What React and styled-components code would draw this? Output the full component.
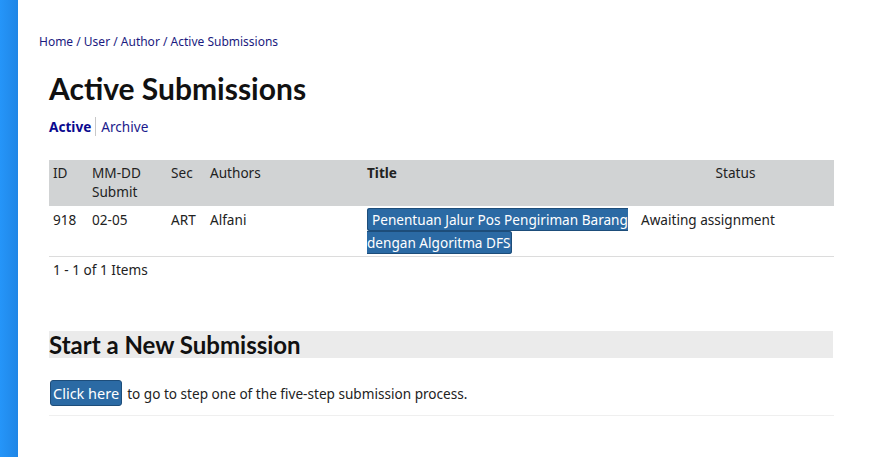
import React from "react";
import styled, { createGlobalStyle } from "styled-components";

const GlobalStyle = createGlobalStyle`
  html, body {
    margin: 0;
    padding: 0;
    background: #fff;
  }
  body {
    font-family: "Noto Sans", "DejaVu Sans", sans-serif;
    color: #222;
  }
`;

const Page = styled.div`
  display: flex;
  min-height: 100vh;
`;

const SideBar = styled.div`
  width: 18px;
  flex-shrink: 0;
  background: linear-gradient(to right, #2595f9, #1f86e6);
`;

const Main = styled.div`
  flex: 1;
  padding: 33px 0 0 21px;
`;

const Breadcrumb = styled.div`
  font-size: 12px;
  color: #1a1a80;
  line-height: 18px;
`;

const Content = styled.div`
  width: 785px;
  margin-left: 10px;
`;

const Heading = styled.h1`
  font-family: Lato, "Noto Sans", sans-serif;
  font-weight: 700;
  font-size: 30px;
  color: #111;
  margin: 19px 0 0;
  line-height: 36px;
`;

const Tabs = styled.div`
  display: flex;
  align-items: center;
  margin-top: 8px;
  font-size: 13.6px;
  height: 24px;
`;

const Tab = styled.a`
  color: ${(p) => (p.$active ? "#0a0a8f" : "#1a1a8c")};
  font-weight: ${(p) => (p.$active ? 700 : 400)};
  text-decoration: none;
  padding: 0 4px 0 0;

  & + & {
    border-left: 1px solid #c8c8c8;
    padding-left: 5px;
  }
`;

const Table = styled.table`
  width: 100%;
  table-layout: fixed;
  border-collapse: collapse;
  margin-top: 22px;
  font-size: 13.6px;
  line-height: 19px;
`;

const Th = styled.th`
  background: #d1d3d4;
  font-weight: ${(p) => (p.$bold ? 700 : 400)};
  text-align: ${(p) => p.$align || "left"};
  vertical-align: top;
  padding: 3px 4px 5px;
  color: #222;
`;

const Td = styled.td`
  vertical-align: top;
  padding: 2px 4px 2px;
  line-height: 23px;
  border-bottom: 1px solid #dcdcdc;
`;

const TitleLink = styled.a`
  background: #2b6aa4;
  color: #fff;
  border: 1px solid #1d4d7a;
  border-radius: 3px;
  padding: 1px 1px 1px 4px;
  text-decoration: none;
`;

const Count = styled.div`
  font-size: 13.6px;
  padding: 3px 4px;
  line-height: 19px;
`;

const SubHeading = styled.h2`
  font-family: Lato, "Noto Sans", sans-serif;
  font-weight: 700;
  font-size: 24px;
  line-height: 27px;
  background: #ebebeb;
  color: #111;
  margin: 49px 1px 0 0;
`;

const StartRow = styled.div`
  display: flex;
  align-items: center;
  gap: 5px;
  margin-top: 22px;
  padding-bottom: 9px;
  border-bottom: 1px solid #efefef;
  font-size: 13.6px;
`;

const Button = styled.a`
  background: #2b6aa4;
  color: #fff;
  border: 1px solid #1d4d7a;
  border-radius: 3px;
  font-size: 14.5px;
  line-height: 24px;
  padding: 0 2px;
  margin-left: 1px;
  text-decoration: none;
`;

const columns = ["39px", "79px", "39px", "157px", "274px", "auto"];

const App = () => {
  return (
    <Page>
      <GlobalStyle />
      <SideBar />
      <Main>
        <Breadcrumb>Home / User / Author / Active Submissions</Breadcrumb>
        <Content>
          <Heading>Active Submissions</Heading>
          <Tabs>
            <Tab $active>Active</Tab>
            <Tab>Archive</Tab>
          </Tabs>
          <Table>
            <colgroup>
              {columns.map((w, i) => (
                <col key={i} style={{ width: w }} />
              ))}
            </colgroup>
            <thead>
              <tr>
                <Th>ID</Th>
                <Th>
                  MM-DD
                  <br />
                  Submit
                </Th>
                <Th>Sec</Th>
                <Th>Authors</Th>
                <Th $bold>Title</Th>
                <Th $align="center">Status</Th>
              </tr>
            </thead>
            <tbody>
              <tr>
                <Td>918</Td>
                <Td>02-05</Td>
                <Td>ART</Td>
                <Td>Alfani</Td>
                <Td>
                  <TitleLink>
                    Penentuan Jalur Pos Pengiriman Barang dengan Algoritma DFS
                  </TitleLink>
                </Td>
                <Td>Awaiting assignment</Td>
              </tr>
            </tbody>
          </Table>
          <Count>1 - 1 of 1 Items</Count>
          <SubHeading>Start a New Submission</SubHeading>
          <StartRow>
            <Button>Click here</Button>
            <span>to go to step one of the five-step submission process.</span>
          </StartRow>
        </Content>
      </Main>
    </Page>
  );
};

export default App;
